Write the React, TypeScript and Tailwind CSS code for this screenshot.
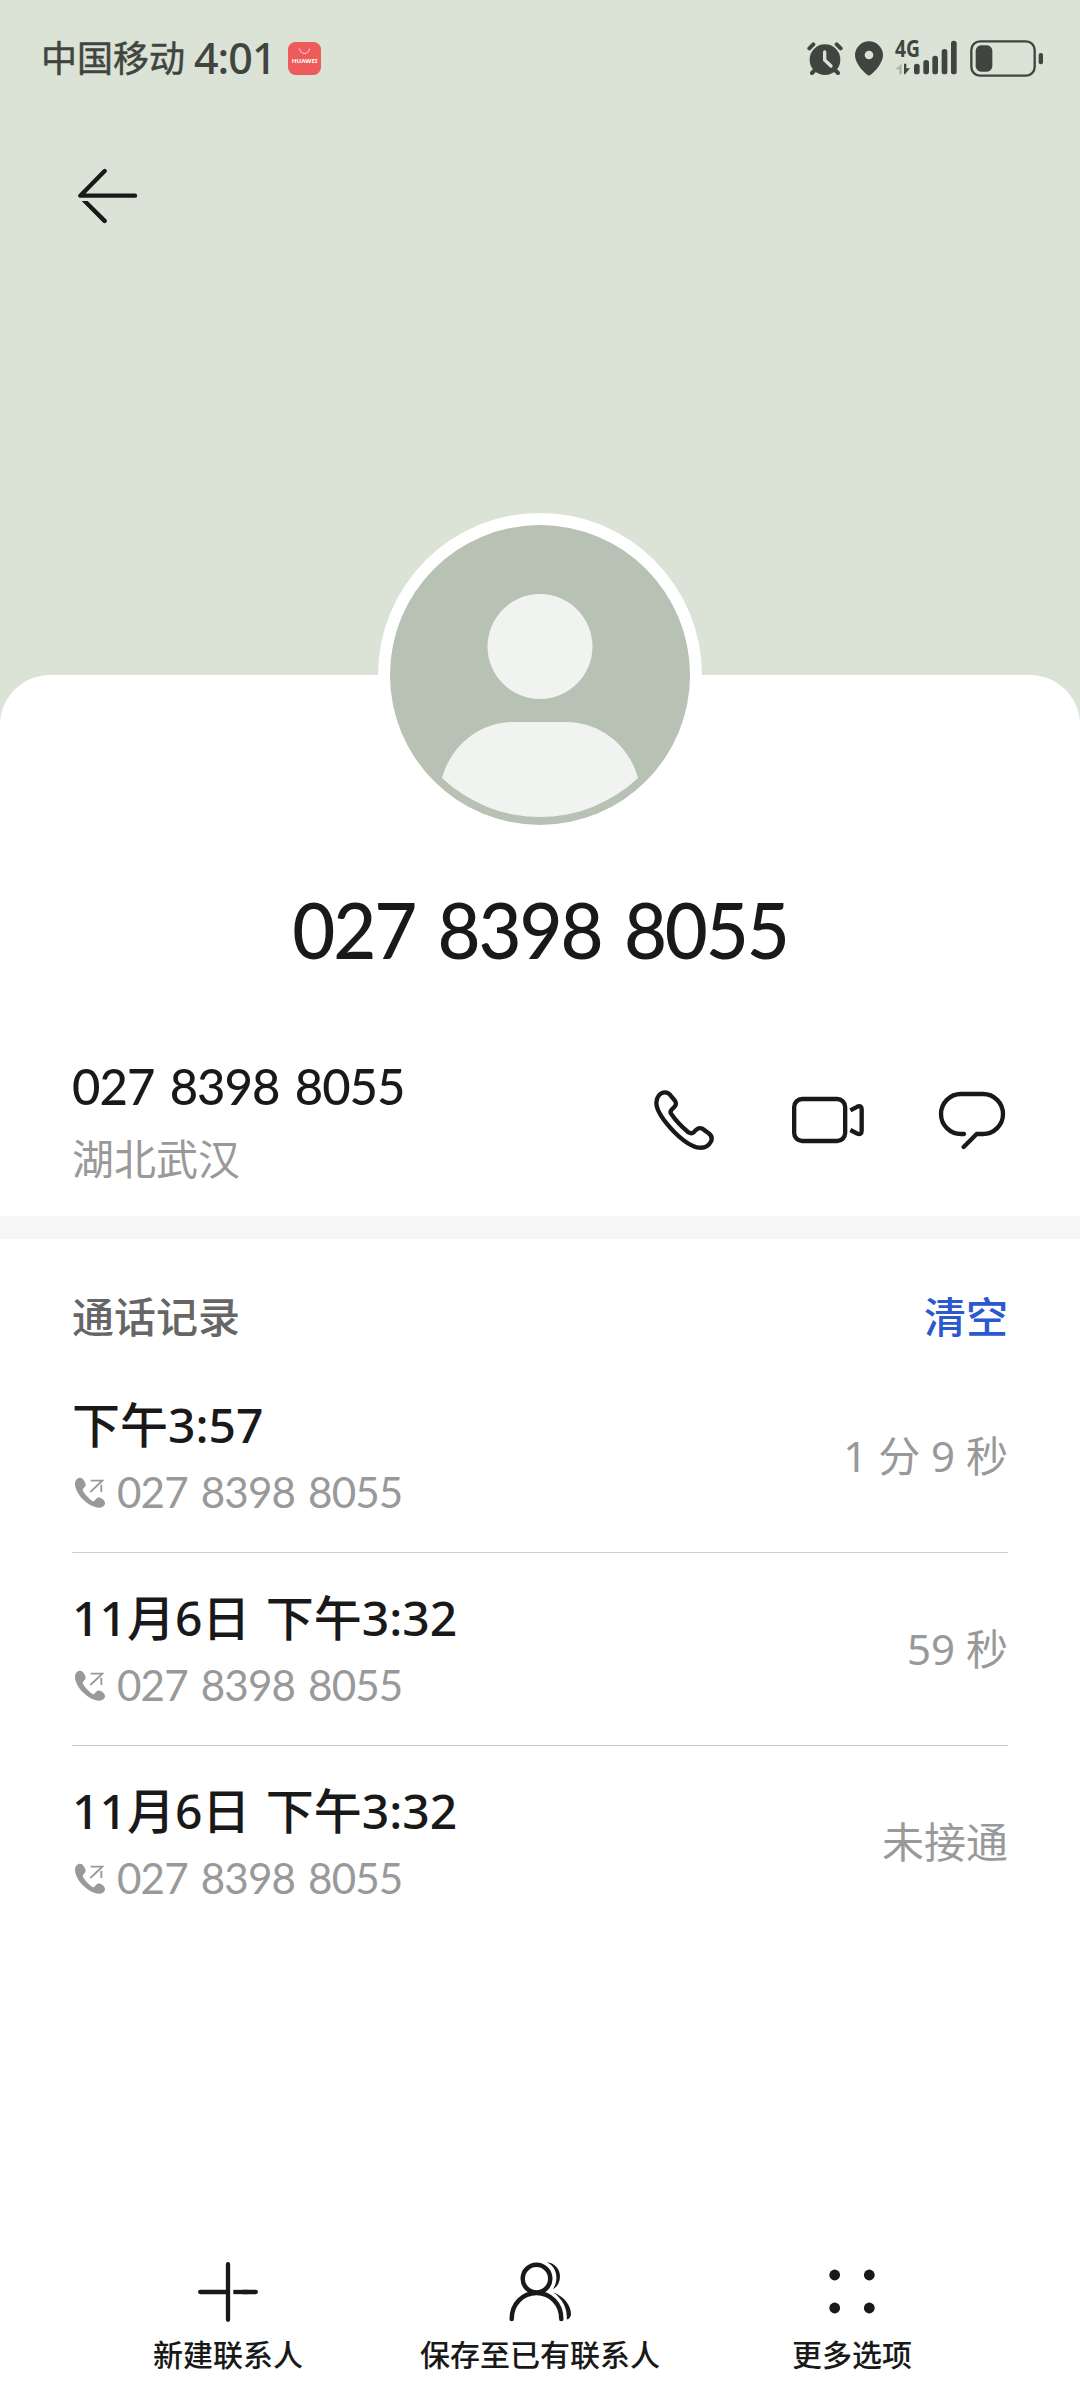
const PHONE_NUMBER = '027 8398 8055';

const callLogs = [
  { time: '下午3:57', duration: '1 分 9 秒' },
  { time: '11月6日 下午3:32', duration: '59 秒' },
  { time: '11月6日 下午3:32', duration: '未接通' }
];

function StatusBar() {
  return (
    <div className="flex h-[116px] items-center justify-between pl-[41px] pr-9 text-[#41453f]">
      <div className="flex items-center">
        <span className="pt-px text-[36px] leading-none font-normal [-webkit-text-stroke:0.5px]">中国移动</span>
        <span className="ml-[9px] pb-px text-[43px] leading-none font-medium tracking-[-1px]">4:01</span>
        <svg viewBox="0 0 33 33" className="ml-3 h-[33px] w-[33px]">
          <rect width="33" height="33" rx="7.5" fill="#ee5b5b" />
          <path d="M11.5 6.5a5 5 0 0 0 10 0" fill="none" stroke="#fbd5d3" strokeWidth="1" />
          <text x="3.8" y="21.2" fontSize="5.6" fontWeight="700" textLength="25.6" lengthAdjust="spacingAndGlyphs" fill="#fff">
            HUAWEI
          </text>
        </svg>
      </div>

      <div className="flex items-center gap-3">
        {/* Alarm */}
        <svg viewBox="51 60 108 108" className="h-9 w-9" fill="none" strokeLinecap="round">
          <circle cx="105" cy="119" r="46" fill="currentColor" />
          <path d="M58 85L70 73M140 73L152 85M66 159L78 147M144 159L132 147" stroke="currentColor" strokeWidth="12" />
          <path d="M104 96V120L123 138" stroke="#dbe2d6" strokeWidth="10" />
        </svg>
        {/* Location */}
        <svg viewBox="195 60 84 108" className="h-9 w-7">
          <path
            fillRule="evenodd"
            fill="currentColor"
            d="M237 167C231 167 195 134 195 106A42 42 0 0 1 279 106C279 134 243 167 237 167ZM237 92a13 13 0 1 0 0 26a13 13 0 1 0 0-26Z"
          />
        </svg>
        {/* Mobile signal */}
        <svg viewBox="315 60 189 108" className="h-9 w-[63px] overflow-visible" fill="currentColor">
          <text x="315" y="112" fontSize="68" fontWeight="700" textLength="75" lengthAdjust="spacingAndGlyphs">
            4G
          </text>
          <path d="M335 131V163H328V148H316Z" opacity="0.3" />
          <path d="M342 131H349V145H360L345 163H342Z" />
          <rect x="372" y="131" width="17" height="32" rx="8" />
          <rect x="400" y="120" width="17" height="43" rx="8" />
          <rect x="427" y="107" width="17" height="56" rx="8" />
          <rect x="455" y="87" width="17" height="76" rx="8" />
          <rect x="483" y="62" width="17" height="101" rx="8" />
        </svg>
        {/* Battery */}
        <svg viewBox="537 54 222 114" className="h-[38px] w-[74px]">
          <rect x="541" y="61" width="190" height="103" rx="26" fill="none" stroke="currentColor" strokeWidth="7" />
          <rect x="554" y="73" width="50" height="79" rx="16" fill="currentColor" />
          <rect x="743" y="96" width="13" height="34" rx="6" fill="currentColor" />
        </svg>
      </div>
    </div>
  );
}

function BackIcon() {
  return (
    <svg viewBox="84 84 180 168" className="h-14 w-[60px]" fill="none">
      <path d="M164 93L91 167H255" stroke="#191919" strokeWidth="13" strokeLinecap="round" strokeLinejoin="round" />
      <path d="M95 183H113L168.500 238A6.500 6.500 0 0 1 159 247.500Z" fill="#191919" />
    </svg>
  );
}

function Avatar() {
  return (
    <svg viewBox="0 0 324 324" className="absolute top-[-162px] left-[378px] h-[324px] w-[324px]">
      <circle cx="162" cy="162" r="162" fill="#fff" />
      <circle cx="162" cy="162" r="150" fill="#b7c1b4" />
      <circle cx="162" cy="133.500" r="52.500" fill="#f0f3ef" />
      <path d="M136 209H188C222 209 251 232 260 265A142.500 142.500 0 0 1 64 265C73 232 102 209 136 209Z" fill="#f0f3ef" />
    </svg>
  );
}

function PhoneIcon() {
  return (
    <svg viewBox="72 87 183 186" className="h-[62px] w-[61px]" fill="none" stroke="#191919" strokeWidth="13">
      <path d="M105 97C115 97 120 103 124 109L134 121C139 128 139 135 133 141L126 148C120 154 121 160 126 165C140 185 155 200 174 216C181 221 186 222 192 216C199 207 207 201 217 206L236 220C245 227 247 237 242 246C234 261 220 264 208 263C185 261 155 238 132 215C110 192 79 155 79 128C79 112 90 97 105 97Z" />
    </svg>
  );
}

function VideoIcon() {
  return (
    <svg viewBox="483 105 222 150" className="h-[50px] w-[74px]" fill="none" stroke="#191919" strokeWidth="13">
      <rect x="492.500" y="117" width="153" height="126" rx="24" />
      <path d="M661 151L681 140.500Q695 134 695 148V212Q695 226 681 220.500L661 210" />
    </svg>
  );
}

function MessageIcon() {
  return (
    <svg viewBox="924 93 207 180" className="h-[60px] w-[69px]" fill="none" stroke="#191919" strokeWidth="13" strokeLinecap="round" strokeLinejoin="round">
      <path d="M1002 225H993A60 60 0 0 1 993 105H1059A60 60 0 0 1 1059 225H1040L1001 264" />
    </svg>
  );
}

function OutgoingIcon() {
  return (
    <svg viewBox="75 616 93 93" className="h-[31px] w-[31px]" fill="#999">
      <path d="M75 636C75 626 82 618 90 618C97 618 101 624 106 634C109 641 105 646 101 649C97 653 98 657 101 661C108 672 118 682 127 688C131 690 134 688 137 683C142 677 148 676 154 680C160 684 166 689 165 696C164 703 155 708 147 708C130 708 108 694 95 679C84 666 75 650 75 636Z" />
      <path d="M122 627H157L121 661M154 639V661" fill="none" stroke="#999" strokeWidth="5.500" />
    </svg>
  );
}

function CallLogs() {
  return (
    <section className="px-[72px]">
      <div className="flex h-[121px] items-center justify-between pt-[35px] text-[42px] leading-none font-medium">
        <h2 className="text-[#666]">通话记录</h2>
        <button className="text-[#2c58d0]">清空</button>
      </div>

      {callLogs.map((log, index) => (
        <div key={index} className="flex h-[193px] items-center justify-between border-b border-[#ccc] last:border-transparent">
          <div className="pt-1">
            <div className="text-[48px] leading-[68px] font-medium text-[#191919] [word-spacing:3px]">{log.time}</div>
            <div className="flex items-center pl-[3px]">
              <OutgoingIcon />
              <span className="ml-[11px] origin-left scale-x-[0.98] font-[Lato] text-[43px] leading-[66px] tracking-[-0.85px] text-[#999] [word-spacing:3px]">
                {PHONE_NUMBER}
              </span>
            </div>
          </div>
          <span className="text-[42px] leading-none text-[#999]">{log.duration}</span>
        </div>
      ))}
    </section>
  );
}

function BottomBar() {
  return (
    <nav className="grid grid-cols-[312px_312px_312px] justify-center pb-[25px] text-[30px] leading-[40px] font-medium text-[#191919]">
      <button className="flex flex-col items-center gap-[13px]">
        <svg viewBox="0 0 60 60" className="h-[60px] w-[60px]" fill="none" stroke="currentColor" strokeWidth="4.300" strokeLinecap="round">
          <path d="M30 2.200V57.800M2.200 30H30" />
          <path d="M57.800 30H45" />
          <path d="M35.300 30H50" strokeLinecap="butt" />
        </svg>
        新建联系人
      </button>
      <button className="flex flex-col items-center gap-[13px]">
        <svg viewBox="0 0 62 60" className="h-[60px] w-[62px]" fill="none" stroke="currentColor" strokeWidth="4.500" strokeLinecap="round">
          <circle cx="27.500" cy="16.600" r="13.800" />
          <path d="M2.700 57C2.700 42 13.500 31 27.500 31S52.300 42 52.300 57" />
          <path stroke="none" fill="currentColor" d="M38 0C46 1.500 51 7 51 14.500C51 20.500 48 25 44 27.200C47 22 48 18 47 12C46.300 7 43 3 38 0Z" />
          <path stroke="none" fill="currentColor" d="M44.500 30.400C54.500 34 62 43 62 52C62 55 60 57.200 57.800 57.500C58.500 46 53.500 37 44.500 30.400Z" />
        </svg>
        保存至已有联系人
      </button>
      <button className="flex flex-col items-center gap-[13px]">
        <svg viewBox="0 0 60 60" className="h-[60px] w-[60px]" fill="currentColor">
          <circle cx="12.700" cy="13" r="5.400" />
          <circle cx="47.300" cy="13" r="5.400" />
          <circle cx="12.700" cy="46" r="5.400" />
          <circle cx="47.300" cy="46" r="5.400" />
        </svg>
        更多选项
      </button>
    </nav>
  );
}

export default function App() {
  return (
    <div className="flex h-[2400px] w-[1080px] flex-col bg-[#dbe2d6] font-['Noto_Sans','Noto_Sans_CJK_SC',sans-serif]">
      <header className="h-[675px] shrink-0">
        <StatusBar />
        <div className="pt-[52px] pl-[78px]">
          <BackIcon />
        </div>
      </header>

      <main className="relative flex flex-1 flex-col rounded-t-[50px] bg-white">
        <Avatar />

        <h1 className="mb-[2px] scale-x-[0.965] pt-[206px] text-center font-[Lato] text-[77px] leading-[96px] font-medium tracking-[-2.2px] text-[#191919] [word-spacing:6px]">
          {PHONE_NUMBER}
        </h1>

        <div className="flex h-[237px] items-center justify-between pt-[45px] pr-[73px] pl-[72px]">
          <div>
            <div className="origin-left scale-x-[0.98] font-[Lato] text-[50px] leading-[76px] font-medium tracking-[-1px] text-[#191919] [word-spacing:4px]">
              {PHONE_NUMBER}
            </div>
            <div className="pt-px text-[42px] leading-[68px] text-[#999]">湖北武汉</div>
          </div>
          <div className="flex items-center">
            <PhoneIcon />
            <div className="ml-[76px]">
              <VideoIcon />
            </div>
            <div className="ml-[73px]">
              <MessageIcon />
            </div>
          </div>
        </div>

        <div className="h-[23px] bg-[#f6f6f6]" />

        <CallLogs />

        <div className="mt-auto">
          <BottomBar />
        </div>
      </main>
    </div>
  );
}
